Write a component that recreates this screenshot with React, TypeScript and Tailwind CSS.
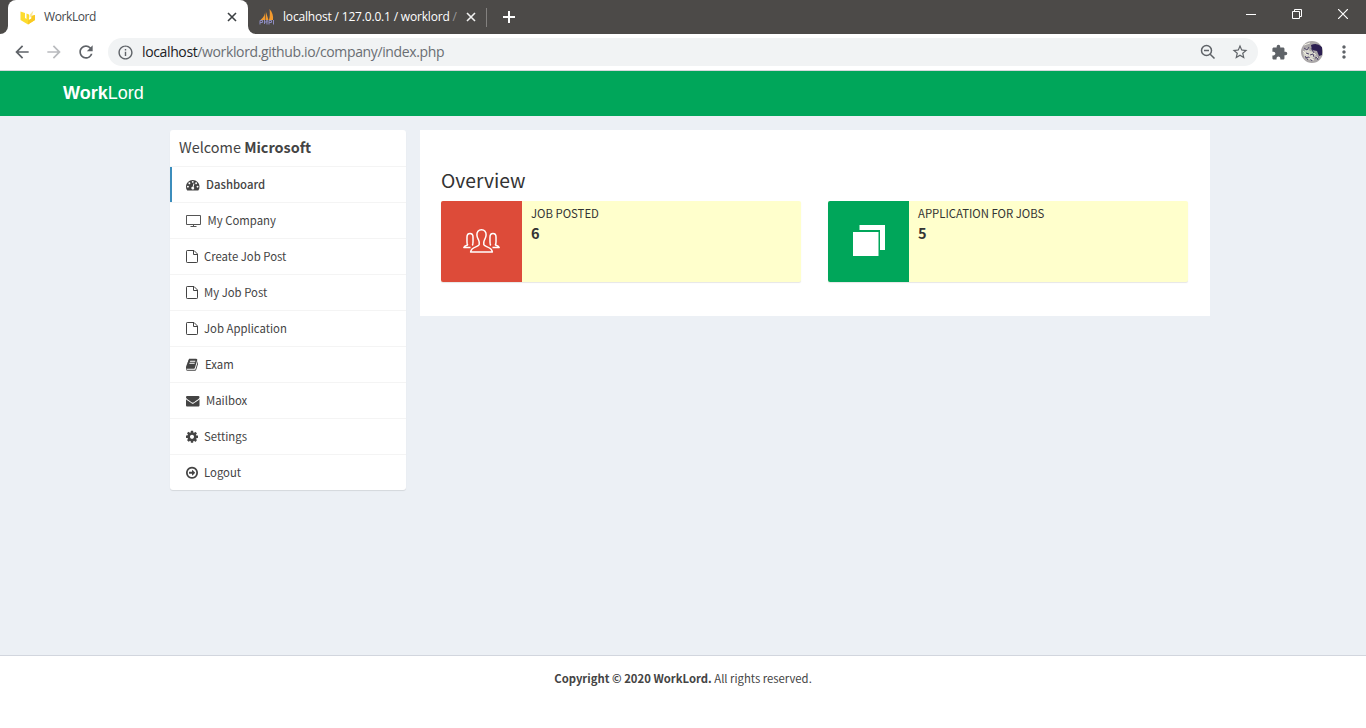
import React from "react";
import { MdArrowBack, MdArrowForward, MdRefresh, MdInfoOutline, MdExtension, MdMoreVert, MdStarBorder } from "react-icons/md";

const PATHS: Record<string, string> = {
  dashboard:
    "M384 1152q0-53-37.5-90.5t-90.5-37.5-90.5 37.5-37.5 90.5 37.5 90.5 90.5 37.5 90.5-37.5 37.5-90.5zm192-448q0-53-37.5-90.5t-90.5-37.5-90.5 37.5-37.5 90.5 37.5 90.5 90.5 37.5 90.5-37.5 37.5-90.5zm428 481l101-382q6-26-7.5-48.5t-38.5-29.5-48 6.5-30 39.5l-101 382q-60 5-107 43.5t-63 98.5q-20 77 20 146t117 89 146-20 89-117q16-60-6-117t-72-91zm660-33q0-53-37.5-90.5t-90.5-37.5-90.5 37.5-37.5 90.5 37.5 90.5 90.5 37.5 90.5-37.5 37.5-90.5zm-640-640q0-53-37.5-90.5t-90.5-37.5-90.5 37.5-37.5 90.5 37.5 90.5 90.5 37.5 90.5-37.5 37.5-90.5zm448 192q0-53-37.5-90.5t-90.5-37.5-90.5 37.5-37.5 90.5 37.5 90.5 90.5 37.5 90.5-37.5 37.5-90.5zm320 448q0 261-141 483-19 29-54 29h-1402q-35 0-54-29-141-221-141-483 0-182 71-348t191-286 286-191 348-71 348 71 286 191 191 286 71 348z",
  book:
    "M1703 478q40 57 18 129l-275 906q-19 64-76.5 107.500t-122.500 43.500h-923q-77 0-148.500-53.500t-99.500-131.500q-24-67-2-127 0-4 3-27t4-37q1-8-3-21.500t-3-19.500q2-11 8-21t16.500-23.500 16.500-23.500q23-38 45-91.500t30-91.500q3-10 .5-30t-.5-28q3-11 17-28t17-23q21-36 42-92t25-90q1-9-2.500-32t.5-28q4-13 22-30.500t22-22.500q19-26 42.500-84.500t27.500-96.500q1-8-3-25.500t-2-26.500q2-8 9-18t18-23 17-21q8-12 16.500-30.500t15-35 16-36 19.500-32 26.500-23.500 36-11.500 47.500 5.500l-1 3q38-9 51-9h761q74 0 114 56t18 130l-274 906q-36 119-71.500 153.500t-128.500 34.500h-869q-27 0-38 15-11 16-1 43 24 70 144 70h923q29 0 56-15.500t35-41.500l300-987q7-22 5-57 38 15 59 43zm-1064 2q-4 13 2 22.500t20 9.500h608q13 0 25.500-9.500t16.500-22.500l21-64q4-13-2-22.500t-20-9.500h-608q-13 0-25.500 9.500t-16.500 22.500zm-83 256q-4 13 2 22.500t20 9.500h608q13 0 25.500-9.500t16.500-22.500l21-64q4-13-2-22.500t-20-9.500h-608q-13 0-25.500 9.500t-16.500 22.500z",
  mail:
    "M1792 710v794q0 66-47 113t-113 47h-1472q-66 0-113-47t-47-113v-794q44 49 101 87 362 246 497 345 57 42 92.5 65.5t94.5 48 110 24.5h2q51 0 110-24.5t94.5-48 92.5-65.5q170-123 498-345 57-39 100-87zm0-294q0 79-49 151t-122 123q-376 261-468 325-10 7-42.5 31t-54 38.5-52 32.5-57.5 27-50 9h-2q-23 0-50-9t-57.5-27-52-32.5-54-38.5-42.5-31q-91-64-262-182.5t-205-142.5q-62-42-117-115.5t-55-136.5q0-78 41.5-130t118.5-52h1472q65 0 112.5 47t47.5 113z",
  cog:
    "M1152 896q0-106-75-181t-181-75-181 75-75 181 75 181 181 75 181-75 75-181zm512-109v222q0 12-8 23t-20 13l-185 28q-19 54-39 91 35 50 107 138 10 12 10 25t-9 23q-27 37-99 108t-94 71q-12 0-26-9l-138-108q-44 23-91 38-16 136-29 186-7 28-36 28h-222q-14 0-24.5-8.5t-11.5-21.5l-28-184q-49-16-90-37l-141 107q-10 9-25 9-14 0-25-11-126-114-165-168-7-10-7-23 0-12 8-23 15-21 51-66.5t54-70.5q-27-50-41-99l-183-27q-13-2-21-12.5t-8-23.5v-222q0-12 8-23t19-13l186-28q14-46 39-92-40-57-107-138-10-12-10-24 0-10 9-23 26-36 98.5-107.5t94.5-71.5q13 0 26 10l138 107q44-23 91-38 16-136 29-186 7-28 36-28h222q14 0 24.5 8.5t11.5 21.5l28 184q49 16 90 37l142-107q9-9 24-9 13 0 25 10 129 119 165 170 7 8 7 22 0 12-8 23-15 21-51 66.5t-54 70.5q26 50 41 98l183 28q13 2 21 12.5t8 23.5z",
  logout:
    "M1285 896q0 14-9 23l-320 320q-9 9-23 9-13 0-22.5-9.5t-9.5-22.5v-192h-352q-13 0-22.5-9.5t-9.5-22.5v-192q0-13 9.5-22.5t22.5-9.5h352v-192q0-14 9-23t23-9q12 0 24 10l319 319q9 9 9 23zm155 0q0-148-73-273t-198-198-273-73-273 73-198 198-73 273 73 273 198 198 273 73 273-73 198-198 73-273zm224 0q0 209-103 385.5t-279.5 279.5-385.5 103-385.5-103-279.5-279.5-103-385.5 103-385.5 279.5-279.5 385.5-103 385.5 103 279.5 279.5 103 385.5z",
};

function MenuIcon({ name }: { name: string }) {
  if (name === "monitor")
    return (
      <svg className="h-3 w-[15px] shrink-0" viewBox="0 0 15 12" fill="none" stroke="#555" strokeWidth="1">
        <path d="M.5.5h14v9H.5zM7.5 10v1M4.5 11.500h6" />
      </svg>
    );
  if (name === "file")
    return (
      <svg className="h-[13px] w-3 shrink-0" viewBox="0 0 12 13" fill="none" stroke="#444" strokeWidth="1">
        <path d="M.5 1.200Q.5.5 1.200.5H8l3.500 3.500v7.800q0 .7-.7.7H1.200q-.7 0-.7-.7zM7.500.5v4h4" />
      </svg>
    );
  const wide = name === "dashboard" || name === "mail";
  return (
    <svg
      className={wide ? "h-[13.5px] w-[13.5px] shrink-0" : "h-[13.5px] w-3 shrink-0"}
      viewBox={wide ? "0 0 1792 1792" : "128 0 1536 1792"}
      preserveAspectRatio="xMidYMid slice"
      fill="#444"
    >
      <path d={PATHS[name]} fillRule={name === "book" ? "nonzero" : "evenodd"} />
    </svg>
  );
}

const MENU = [
  { icon: "dashboard", label: "Dashboard", gap: "ml-[6.5px]", active: true },
  { icon: "monitor", label: "My Company", gap: "ml-[6.500px]" },
  { icon: "file", label: "Create Job Post", gap: "ml-[6px]" },
  { icon: "file", label: "My Job Post", gap: "ml-[6px]" },
  { icon: "file", label: "Job Application", gap: "ml-[6px]" },
  { icon: "book", label: "Exam", gap: "ml-[7px]" },
  { icon: "mail", label: "Mailbox", gap: "ml-[6.5px]" },
  { icon: "cog", label: "Settings", gap: "ml-[6px]" },
  { icon: "logout", label: "Logout", gap: "ml-[6px]" },
];

function Cross({ color }: { color: string }) {
  return (
    <svg className="size-[10px] shrink-0" viewBox="0 0 10 10" stroke={color} strokeWidth="1.6">
      <path d="M1 1l8 8M9 1l-8 8" />
    </svg>
  );
}

function TabStrip() {
  return (
    <div className="flex h-[34px] bg-[#4c4a48]">
      <div className="flex w-2 items-end bg-white">
        <div className="h-[34px] w-2 rounded-br-lg bg-[#4c4a48]" />
      </div>
      <div className="flex bg-[#4c4a48]">
        <div className="flex w-[240px] items-center rounded-t-lg bg-white pl-3">
          <svg className="size-4" viewBox="0 0 16 16">
            <path d="M.5 2.500L5 4v5l1.500 1V4.500L9 5.500V11l2.500-1.500V7L15 6v5l-7 4.500L.5 11z" fill="#fddc2e" />
            <path d="M8 11.500l3.500-2V7L15 6v5l-7 4.500z" fill="#f9c922" />
            <path d="M9.500 6l4-4.500L12 6.500 9.500 9z" fill="#fbe79a" />
          </svg>
          <span className="ml-2 text-[12px] leading-4 tracking-[-0.4px] text-[#45494d]">WorkLord</span>
          <div className="ml-auto mr-[11px] flex"><Cross color="#3c4043" /></div>
        </div>
      </div>
      <div className="flex bg-white">
        <div className="flex w-[238px] items-center rounded-bl-lg bg-[#4c4a48] pl-[11px]">
          <svg className="size-4 shrink-0" viewBox="0 0 16 16">
            <path d="M6 1.500C6.500 5 5 8 1.500 11H6.500zM7 3v8h2.500zM10.500 0c3 3 4 7 3.500 11h-4C11 8 11 4 10.500 0z" fill="#f29a2e" />
            <path d="M1 15.500v-4h2.500v2H1M5.500 11v4M5.500 13H8v-2 4.500M10 15.500v-4h2.500v2H10M14.500 11v4.500" fill="none" stroke="#8d8cc0" />
          </svg>
          <span className="ml-2 whitespace-nowrap text-[12px] leading-4 tracking-[-0.18px] text-white">
            localhost / 127.0.0.1 / worklord <span className="text-[#9a9998]">/</span>
          </span>
          <div className="ml-auto mr-[10px] flex"><Cross color="#f1f1f1" /></div>
        </div>
      </div>
      <div className="mt-2 h-[19px] w-px bg-[#83817f]" />
      <svg className="ml-4 mt-[11px] size-3" viewBox="0 0 12 12" stroke="#fff" strokeWidth="2">
        <path d="M6 0v12M0 6h12" />
      </svg>
      <div className="ml-auto flex items-start pr-[18px] pt-[9px]">
        <svg className="h-[10px] w-[10px]" viewBox="0 0 10 10" stroke="#fff"><path d="M0 5.500h10" /></svg>
        <svg className="ml-[36px] h-[10px] w-[10px]" viewBox="0 0 10 10" stroke="#fff" fill="none"><path d="M.5 2.500h7v7h-7zM2.500 2.500v-2h7v7h-2" /></svg>
        <svg className="ml-[36px] h-[10px] w-[10px]" viewBox="0 0 10 10" stroke="#fff" strokeWidth="1.200"><path d="M0 0l10 10M10 0L0 10" /></svg>
      </div>
    </div>
  );
}

function Toolbar() {
  return (
    <div className="flex h-[37px] items-center border-b border-[#d5d8dc] bg-white pl-3 text-[#5f6368]">
      <MdArrowBack className="size-5" />
      <MdArrowForward className="ml-3 size-5 text-[#b9bbbe]" />
      <MdRefresh className="ml-3 size-5" />
      <div className="ml-3 flex h-7 w-[1150px] items-center rounded-full bg-[#f1f3f4] pl-[9px] pr-[9px]">
        <MdInfoOutline className="size-[17px]" />
        <span className="ml-[8px] text-[14px] leading-5 tracking-[-0.37px] text-[#6a6e73]">
          <span className="text-[#202124]">localhost</span>/worklord.github.io/company/index.php
        </span>
        <svg className="ml-auto size-[18px]" viewBox="0 0 18 18" fill="none" stroke="currentColor" strokeWidth="1.500">
          <circle cx="7.500" cy="7.500" r="5" />
          <path d="M11.200 11.200l4.300 4.300M5 7.500h5" />
        </svg>
        <MdStarBorder className="ml-[14px] size-[18px]" />
      </div>
      <MdExtension className="ml-[13px] size-[17px]" />
      <svg className="ml-[13px] size-[22px] rounded-full" viewBox="0 0 22 22">
        <rect width="22" height="22" fill="#aaa7a8" />
        <path d="M10 4q6-3 11 2v8l-3 1-2-5-5-1z" fill="#2c1f52" />
        <path d="M2 12l4-5 3 3 4 1 1 5-4 3-6-1z" fill="#d6d6cc" />
        <path d="M3 7l3 2 2-3M5 12l3 1M9 14l3-1 1 3M4 17l4-1 3 4M14 17l4-1M7 19l-3-4M10 7l3 5M15 14l2 5" stroke="#51486b" fill="none" />
        <path d="M3 4l6-2M2 10l4 4M13 12l4 5M8 17l5 2" stroke="#efeee2" fill="none" />
      </svg>
      <MdMoreVert className="ml-[11px] size-[20px]" />
    </div>
  );
}

const SIDE_PERSON =
  "M7.500 18.600H.8c.3-1.600 1.600-1.900 3.200-2.300.8-.3.600-1 .200-1.500C3.800 13.500 4 10.500 4 8c0-2.600 1.200-3.600 3-3.600s3 1 3 3.600c0 2.500.200 5.500-.200 6.800-.4.5-.3 1.300.4 1.600";

function StatCard({ color, label, value, children }: { color: string; label: string; value: string; children: React.ReactNode }) {
  return (
    <div className="flex h-[81px] w-[360px] rounded-[2px] bg-[#ffffcc] shadow-[0_1px_1px_rgba(0,0,0,0.1)]">
      <div className={`flex w-[81px] items-center justify-center rounded-l-[2px] pb-[2px] ${color}`}>{children}</div>
      <div className="flex flex-col pl-[9px] pt-[3px] text-[#333]">
        <span className="text-[11.35px] leading-[18px]">{label}</span>
        <span className="mt-[2px] text-[14.5px] font-bold leading-[18px]">{value}</span>
      </div>
    </div>
  );
}

export default function App() {
  return (
    <div className="flex h-[728px] w-[1366px] flex-col overflow-hidden bg-[#ecf0f5]">
      <div className="font-['Open_Sans','Noto_Sans',sans-serif]">
        <TabStrip />
        <Toolbar />
      </div>
      <header className="flex h-[45px] shrink-0 items-center bg-[#00a65a] pl-[63px] font-['Liberation_Sans',Arial,sans-serif] text-[18px] leading-[45px] text-white">
        <b>Work</b>Lord
      </header>
      <div className="flex flex-1 flex-col font-['Noto_Sans_CJK_SC',sans-serif] text-[#444]">
        <main className="flex flex-1 items-start gap-[14px] pl-[170px] pt-[14px]">
          <aside className="w-[236px] rounded-[3px] bg-white shadow-[0_1px_1px_rgba(0,0,0,0.1)]">
            <h3 className="h-9 pl-[9px] text-[14.45px] leading-[33px]">
              Welcome <b>Microsoft</b>
            </h3>
            <ul>
              {MENU.map((m) => (
                <li
                  key={m.label}
                  className={`flex h-9 items-center border-t border-[#f4f4f4] text-[11.35px] leading-[35px] ${m.active ? "font-medium" : ""}`}
                >
                  <div className={`flex h-[35px] flex-1 items-center border-l-2 pl-[14px] ${m.active ? "border-[#3c8dbc]" : "border-transparent"}`}>
                    <MenuIcon name={m.icon} />
                    <span className={m.gap}>{m.label}</span>
                  </div>
                </li>
              ))}
            </ul>
          </aside>
          <section className="h-[186px] w-[790px] bg-white pl-[21px] pt-[36px]">
            <h3 className="mb-[7px] text-[19.3px] leading-7 text-[#333]">Overview</h3>
            <div className="flex gap-[27px]">
              <StatCard color="bg-[#dd4b39]" label="JOB POSTED" value="6">
                <svg className="h-6 w-[37px]" viewBox="0 0 37 24" fill="none" stroke="#fff" strokeWidth="1.500" strokeLinejoin="round">
                  <path d="M18.500.8c-3 0-4.800 1.900-4.600 5.200.1 2.300 1 3.600 1.700 5 .8 1.700.9 3 .6 4.700-.4 2.400-8 1.500-8.600 7.400h21.800c-.6-5.900-8.200-5-8.600-7.400-.3-1.700-.2-3 .6-4.700.7-1.400 1.600-2.700 1.700-5 .2-3.300-1.600-5.200-4.600-5.200z" />
                  <path d={SIDE_PERSON} />
                  <path d={SIDE_PERSON} transform="matrix(-1 0 0 1 37 0)" />
                </svg>
              </StatCard>
              <StatCard color="bg-[#00a65a]" label="APPLICATION FOR JOBS" value="5">
                <svg className="h-[31px] w-8" viewBox="0 0 32 31" fill="#fff">
                  <path d="M0 7h25.500v24H0zM6.500 0H32v25h-5V5H6.500z" />
                </svg>
              </StatCard>
            </div>
          </section>
        </main>
        <footer className="h-[73px] border-t border-[#d2d6de] bg-white pt-[12px] text-center text-[11.3px] leading-5">
          <b>Copyright © 2020 WorkLord.</b> All rights reserved.
        </footer>
      </div>
    </div>
  );
}
